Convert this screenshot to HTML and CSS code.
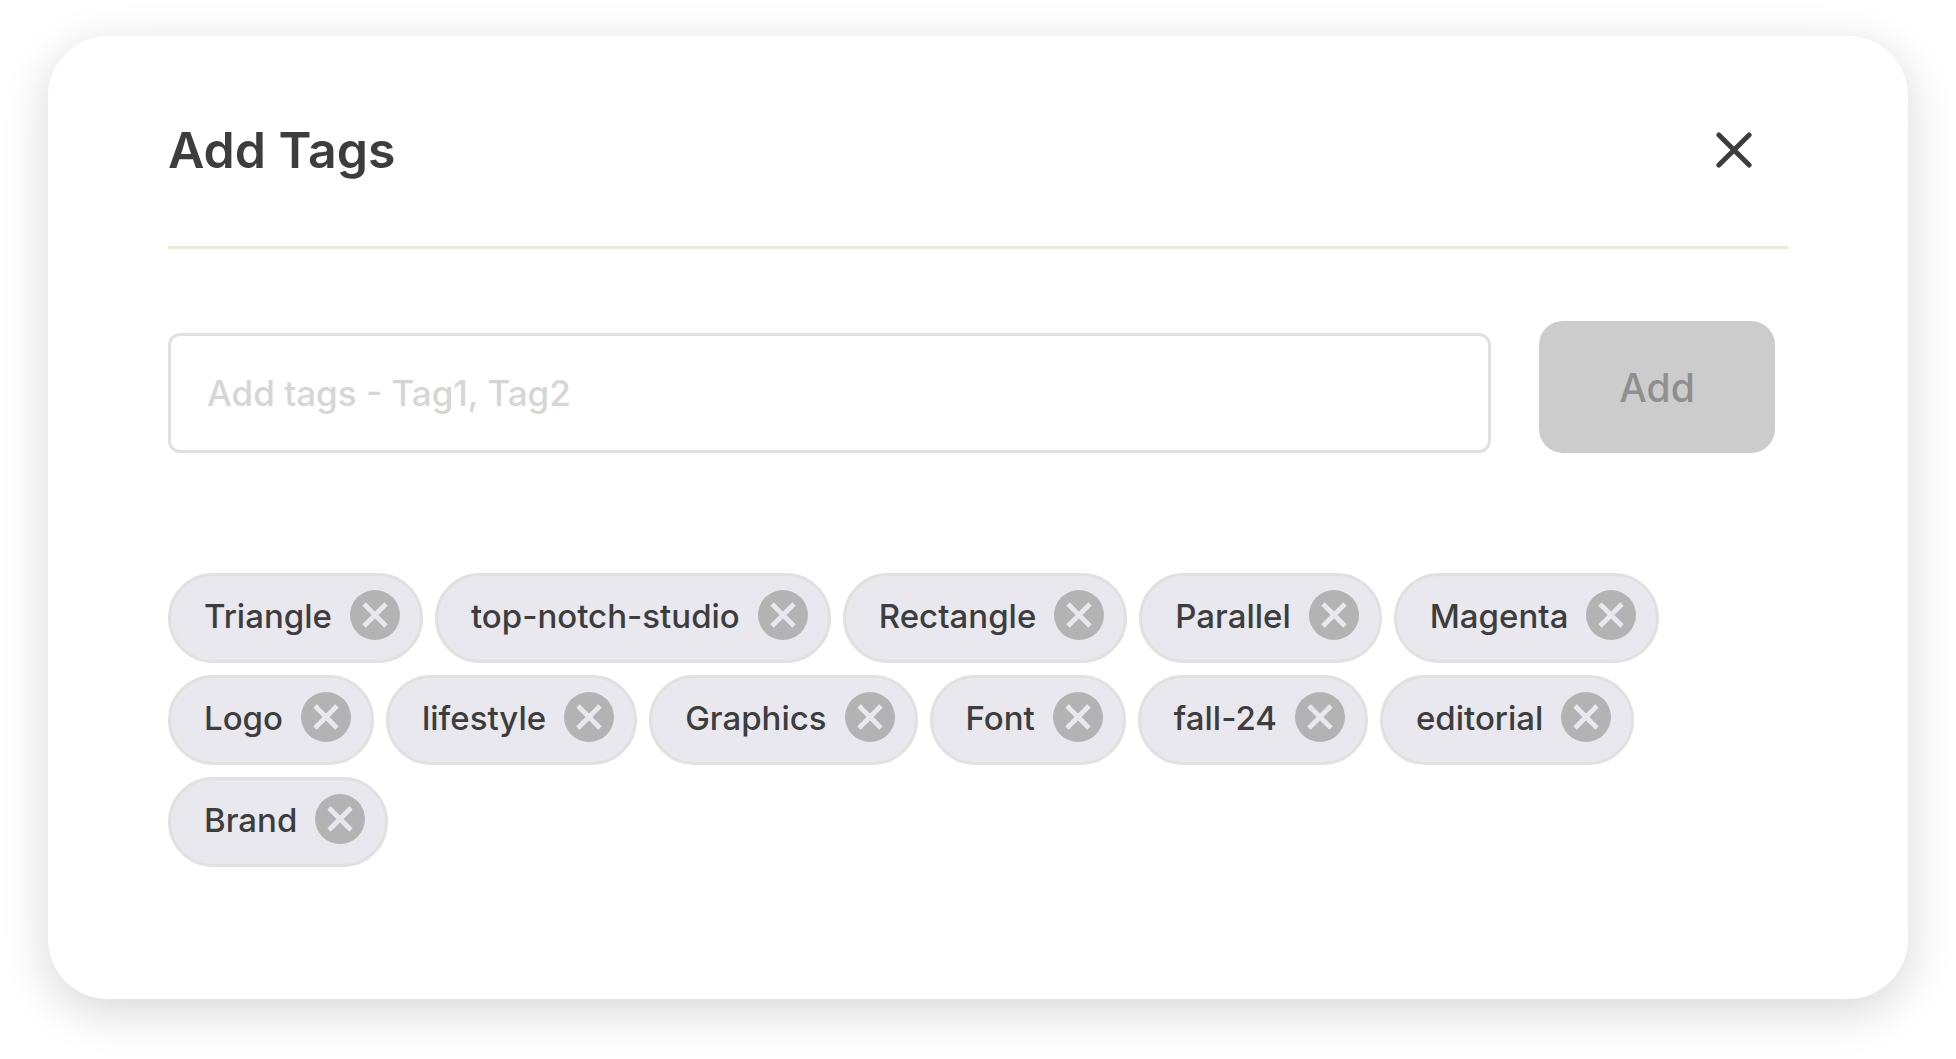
FILE: index.html
```html
<!DOCTYPE html>
<html lang="en">
<head>
    <meta charset="UTF-8">
    <title>Add Tags</title>
    <link rel="stylesheet" href="styles.css">
</head>
<body>
<svg class="sprite" aria-hidden="true">
    <symbol id="icon-remove" viewBox="0 0 50 50">
        <circle cx="25" cy="25" r="25" fill="#b3b3b3"/>
        <path d="M14 14L36 36M36 14L14 36" stroke="#e9e8ee" stroke-width="4.8"/>
    </symbol>
</svg>
<div class="modal" role="dialog" aria-labelledby="modal-title">
    <div class="modal-header">
        <h1 id="modal-title">Add Tags</h1>
        <button class="close" type="button" aria-label="Close">
            <svg viewBox="0 0 36 36"><path d="M2.9 2.9L33.1 33.1M33.1 2.9L2.9 33.1"/></svg>
        </button>
    </div>
    <form class="tag-form">
        <input class="tag-input" type="text" aria-label="Tags" placeholder="Add tags - Tag1, Tag2">
        <button class="add" type="submit" disabled>Add</button>
    </form>
    <ul class="tags">
        <li class="tag"><span>Triangle</span><button type="button" aria-label="Remove Triangle"><svg><use href="#icon-remove"/></svg></button></li>
        <li class="tag"><span>top-notch-studio</span><button type="button" aria-label="Remove top-notch-studio"><svg><use href="#icon-remove"/></svg></button></li>
        <li class="tag"><span>Rectangle</span><button type="button" aria-label="Remove Rectangle"><svg><use href="#icon-remove"/></svg></button></li>
        <li class="tag"><span>Parallel</span><button type="button" aria-label="Remove Parallel"><svg><use href="#icon-remove"/></svg></button></li>
        <li class="tag"><span>Magenta</span><button type="button" aria-label="Remove Magenta"><svg><use href="#icon-remove"/></svg></button></li>
        <li class="tag"><span>Logo</span><button type="button" aria-label="Remove Logo"><svg><use href="#icon-remove"/></svg></button></li>
        <li class="tag"><span>lifestyle</span><button type="button" aria-label="Remove lifestyle"><svg><use href="#icon-remove"/></svg></button></li>
        <li class="tag"><span>Graphics</span><button type="button" aria-label="Remove Graphics"><svg><use href="#icon-remove"/></svg></button></li>
        <li class="tag"><span>Font</span><button type="button" aria-label="Remove Font"><svg><use href="#icon-remove"/></svg></button></li>
        <li class="tag"><span>fall-24</span><button type="button" aria-label="Remove fall-24"><svg><use href="#icon-remove"/></svg></button></li>
        <li class="tag"><span>editorial</span><button type="button" aria-label="Remove editorial"><svg><use href="#icon-remove"/></svg></button></li>
        <li class="tag"><span>Brand</span><button type="button" aria-label="Remove Brand"><svg><use href="#icon-remove"/></svg></button></li>
    </ul>
</div>
</body>
</html>
```

FILE: styles.css
```css
*{
    box-sizing: border-box;
    margin: 0;
    padding: 0;
}
body{
    padding: 36px 48px 60px;
    background: #fff;
    color: #3d3d3d;
    font-family: Inter, sans-serif;
}
button,input{
    border: none;
    background: none;
    font-family: inherit;
}
svg{
    display: block;
}
.sprite{
    display: none;
}
.modal{
    padding: 0 120px 132px;
    border-radius: 60px;
    background: #fff;
    box-shadow: 0 12px 48px rgba(0, 0, 0, 0.16);
}
/* header */
.modal-header{
    display: flex;
    align-items: center;
    justify-content: space-between;
    padding: 84px 36px 66px 0;
    border-bottom: 3px solid #ebe8dd;
}
.modal-header h1{
    font-size: 50px;
    line-height: 60px;
    font-weight: 600;
}
.close svg{
    width: 36px;
    height: 36px;
    fill: none;
    stroke: #3d3d3d;
    stroke-width: 5;
    stroke-linecap: round;
}
/* input row */
.tag-form{
    display: flex;
    align-items: flex-end;
    gap: 48px;
    padding: 72px 13px 0 0;
}
.tag-input{
    flex: 1;
    min-width: 0;
    height: 120px;
    padding: 0 36px;
    border: 3px solid #e0e0e0;
    border-radius: 12px;
    font-size: 35px;
    font-weight: 500;
    color: #3d3d3d;
}
.tag-input::placeholder{
    color: #d6d6d6;
}
.add{
    width: 236px;
    height: 132px;
    border-radius: 24px;
    background: #ccc;
    color: #8f8f8f;
    font-size: 39px;
    font-weight: 500;
}
/* tag list */
.tags{
    display: flex;
    flex-wrap: wrap;
    gap: 12px;
    padding: 120px 120px 0 0;
    list-style: none;
}
.tag{
    display: flex;
    align-items: center;
    gap: 18px;
    height: 90px;
    padding: 0 20px 6px 33px;
    border: 3px solid #e1e1e1;
    border-radius: 45px;
    background: #e9e8ee;
    font-size: 33px;
    line-height: 42px;
    font-weight: 500;
}
.tag span{
    padding-top: 2px;
}
.tag svg{
    width: 50px;
    height: 50px;
}
```
